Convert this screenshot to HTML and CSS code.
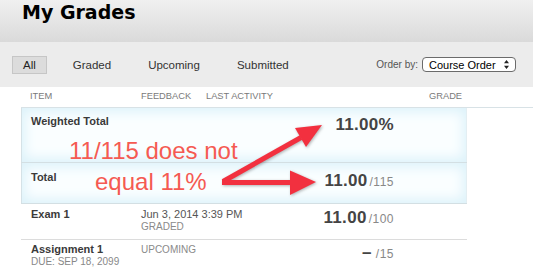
FILE: index.html
```html
<!DOCTYPE html>
<html>
<head>
<meta charset="utf-8">
<link rel="stylesheet" href="styles.css">
</head>
<body>
<div class="page">
  <header class="title-bar"><h1>My Grades</h1></header>
  <div class="toolbar">
    <nav class="tabs">
      <span class="tab active">All</span>
      <span class="tab">Graded</span>
      <span class="tab">Upcoming</span>
      <span class="tab">Submitted</span>
    </nav>
    <div class="order">
      <span class="order-label">Order by:</span>
      <div class="select">
        <span>Course Order</span>
        <svg class="select-arrows" width="5" height="9" viewBox="0 0 5 9"><path d="M2.5 0 L5 3.2 L0 3.2 Z M0 5.8 L5 5.8 L2.5 9 Z" fill="#222"/></svg>
      </div>
    </div>
  </div>
  <section class="grades">
    <div class="thead">
      <span class="th-item">Item</span>
      <span class="th-feedback">Feedback</span>
      <span class="th-activity">Last Activity</span>
      <span class="th-grade">Grade</span>
    </div>
    <div class="row total-row weighted">
      <div class="item"><div class="name">Weighted Total</div></div>
      <div class="info"></div>
      <div class="grade"><span class="score">11.00%</span></div>
    </div>
    <div class="row total-row total">
      <div class="item"><div class="name">Total</div></div>
      <div class="info"></div>
      <div class="grade"><span class="score">11.00</span><span class="out">/115</span></div>
    </div>
    <div class="row exam">
      <div class="item"><div class="name">Exam 1</div></div>
      <div class="info"><div class="date">Jun 3, 2014 3:39 PM</div><div class="status">Graded</div></div>
      <div class="grade"><span class="score">11.00</span><span class="out">/100</span></div>
    </div>
    <div class="row assign">
      <div class="item"><div class="name">Assignment 1</div><div class="sub">Due: Sep 18, 2099</div></div>
      <div class="info"><div class="status first">Upcoming</div></div>
      <div class="grade"><span class="score dash">–</span><span class="out">/15</span></div>
    </div>
  </section>
  <div class="annotation">
    <div class="note"><span class="l1">11/115 does not</span><span class="l2">equal 11%</span></div>
    <svg class="arrows" width="533" height="272" viewBox="0 0 533 272">
      <g fill="#f2303f" stroke="#f2303f">
        <line x1="223" y1="181.5" x2="301" y2="137.5" stroke-width="5"/>
        <polygon points="322,125 295,128 306,147" stroke="none"/>
        <line x1="222" y1="182.5" x2="292" y2="182.5" stroke-width="5"/>
        <polygon points="316,182 290,170.5 290,195" stroke="none"/>
      </g>
    </svg>
  </div>
</div>
</body>
</html>
```

FILE: styles.css
```css
* { box-sizing: border-box; }

body {
  margin: 0;
  background: #fff;
  font-family: "Liberation Sans", Arial, sans-serif;
}

.page {
  position: relative;
  width: 533px;
  height: 272px;
  overflow: hidden;
}

.title-bar {
  height: 42px;
  padding: 1px 0 0 22px;
  background: linear-gradient(#f0f0f0, #dadada);
}

.title-bar h1 {
  margin: 0;
  font: bold 19px/22px "DejaVu Sans", sans-serif;
  color: #000;
}

.toolbar {
  height: 45px;
  display: flex;
  align-items: center;
  justify-content: space-between;
  padding: 0 17px 0 12px;
  background: #ececec;
}

.tabs {
  display: flex;
  gap: 15px;
}

.tab {
  height: 18px;
  padding: 0 10px;
  border: 1px solid transparent;
  font-size: 11.5px;
  line-height: 16px;
  color: #333;
}

.tab.active {
  background: #dcdcdc;
  border-color: #c6c6c6;
  color: #222;
}

.order {
  display: flex;
  align-items: center;
  gap: 4px;
}

.order-label {
  font-size: 10px;
  color: #555;
}

.select {
  width: 94px;
  height: 15px;
  display: flex;
  align-items: center;
  justify-content: space-between;
  padding: 0 6px 0 6px;
  border: 1px solid #6b6b6b;
  border-radius: 4px;
  background: #fff;
  font-size: 11px;
  color: #000;
}

.grades {
  padding-left: 21px;
}

.thead {
  display: flex;
  height: 21px;
  padding: 4px 0 0 9px;
  border-bottom: 1px solid #d8e2e6;
  font-size: 9.3px;
  line-height: 11px;
  color: #7a7a7a;
  text-transform: uppercase;
}

.th-item { width: 111px; }
.th-feedback { width: 65px; }
.th-activity { width: 223px; }

.row {
  width: 446px;
  display: flex;
  align-items: flex-start;
  padding: 4px 73px 6px 10px;
  border-bottom: 1px solid #dcdcdc;
}

.total-row {
  background: #fafeff;
  box-shadow: inset 1px 0 #d5e2e7, inset -1px 0 #e3eef2, inset 0 0 12px 4px #ddf2fa;
  border-bottom-color: #d3dfe3;
}

.total-row.weighted { height: 55px; padding-top: 7px; }
.total-row.total { height: 41px; padding-top: 8px; }
.row.exam { height: 36px; }
.row.assign { padding-top: 3px; }

.item { width: 110px; }
.info { flex: 1; }
.grade {
  white-space: nowrap;
  text-align: right;
  line-height: 20px;
}

.name {
  font-size: 11px;
  line-height: 13px;
  font-weight: bold;
  color: #3a3a3a;
}

.sub {
  font-size: 10px;
  line-height: 12px;
  color: #888;
  text-transform: uppercase;
}

.date {
  font-size: 11px;
  line-height: 13px;
  color: #555;
}

.status {
  font-size: 10px;
  line-height: 12px;
  color: #8a8a8a;
  text-transform: uppercase;
}

.status.first { line-height: 13px; }

.score {
  font-size: 17px;
  font-weight: bold;
  letter-spacing: 0.3px;
  color: #444;
}

.score.dash { margin-right: 2px; }

.out {
  margin-left: 2px;
  font-size: 12px;
  letter-spacing: 0.5px;
  color: #888;
}

.annotation {
  position: absolute;
  left: 0;
  top: 0;
  width: 533px;
  height: 272px;
  pointer-events: none;
}

.note {
  position: absolute;
  left: 69px;
  top: 136px;
  font-size: 24px;
  line-height: 30.5px;
  color: #f55a52;
  white-space: nowrap;
}

.note span { display: block; }
.note .l2 { margin-left: 26px; }

.arrows {
  position: absolute;
  left: 0;
  top: 0;
  filter: drop-shadow(1px 1.5px 1.5px rgba(0, 0, 0, 0.3));
}
```
